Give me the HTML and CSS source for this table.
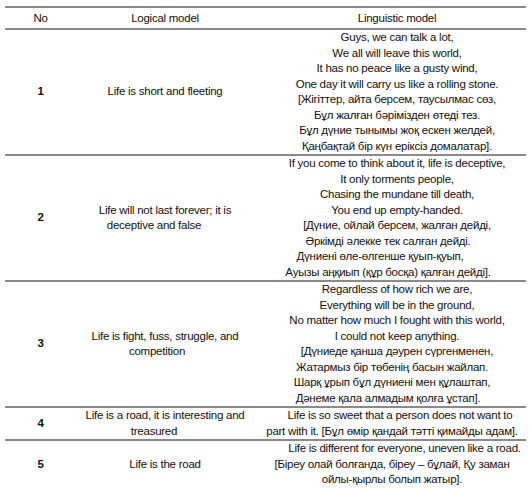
FILE: index.html
```html
<!DOCTYPE html>
<html lang="en">
<head>
<meta charset="utf-8">
<title>Models of life</title>
<link rel="stylesheet" href="styles.css">
</head>
<body>
<table class="models">
  <colgroup>
    <col class="col-no">
    <col class="col-logic">
    <col class="col-ling">
  </colgroup>
  <thead>
    <tr>
      <th class="no">No</th>
      <th class="logic">Logical model</th>
      <th class="ling">Linguistic model</th>
    </tr>
  </thead>
  <tbody>
    <tr>
      <td class="no">1</td>
      <td class="logic">Life is short and fleeting</td>
      <td class="ling">
        <span class="ln">Guys, we can talk a lot,</span>
        <span class="ln">We all will leave this world,</span>
        <span class="ln">It has no peace like a gusty wind,</span>
        <span class="ln">One day it will carry us like a rolling stone.</span>
        <span class="ln">[Жігіттер, айта берсем, таусылмас сөз,</span>
        <span class="ln">Бұл жалған бәрімізден өтеді тез.</span>
        <span class="ln">Бұл дүние тынымы жоқ ескен желдей,</span>
        <span class="ln">Қаңбақтай бір күн еріксіз домалатар].</span>
      </td>
    </tr>
    <tr>
      <td class="no">2</td>
      <td class="logic">
        <span class="ln">Life will not last forever; it is</span>
        <span class="ln tail">deceptive and false</span>
      </td>
      <td class="ling">
        <span class="ln">If you come to think about it, life is deceptive,</span>
        <span class="ln">It only torments people,</span>
        <span class="ln">Chasing the mundane till death,</span>
        <span class="ln">You end up empty-handed.</span>
        <span class="ln">[Дүние, ойлай берсем, жалған дейді,</span>
        <span class="ln nudge-1">Әркімді әлекке тек салған дейді.</span>
        <span class="ln nudge-2">Дүниені өле-өлгенше қуып-қуып,</span>
        <span class="ln nudge-1">Ауызы аңқиып (құр босқа) қалған дейді].</span>
      </td>
    </tr>
    <tr>
      <td class="no">3</td>
      <td class="logic">
        <span class="ln">Life is fight, fuss, struggle, and</span>
        <span class="ln tail-s">competition</span>
      </td>
      <td class="ling">
        <span class="ln">Regardless of how rich we are,</span>
        <span class="ln">Everything will be in the ground,</span>
        <span class="ln">No matter how much I fought with this world,</span>
        <span class="ln">I could not keep anything.</span>
        <span class="ln">[Дүниеде қанша дәурен сүргенменен,</span>
        <span class="ln nudge-s">Жатармыз бір төбенің басын жайлап.</span>
        <span class="ln nudge-s">Шарқ ұрып бұл дүниені мен құлаштап,</span>
        <span class="ln nudge-1">Дәнеме қала алмадым қолға ұстап].</span>
      </td>
    </tr>
    <tr>
      <td class="no">4</td>
      <td class="logic">
        <span class="ln">Life is a road, it is interesting and</span>
        <span class="ln tail">treasured</span>
      </td>
      <td class="ling short">
        <span class="ln lead-1">Life is so sweet that a person does not want to</span>
        <span class="ln">part with it. [Бұл өмір қандай тәтті қимайды адам].</span>
      </td>
    </tr>
    <tr>
      <td class="no">5</td>
      <td class="logic">Life is the road</td>
      <td class="ling short">
        <span class="ln lead-2">Life is different for everyone, uneven like a road.</span>
        <span class="ln">[Біреу олай болғанда, біреу – бұлай, Қу заман</span>
        <span class="ln">ойлы-қырлы болып жатыр].</span>
      </td>
    </tr>
  </tbody>
</table>
</body>
</html>
```

FILE: styles.css
```css
html, body {
  margin: 0;
  padding: 0;
  background: #ffffff;
}

body {
  padding: 6px 0 0 5px;
  font-family: "Liberation Sans", Arial, sans-serif;
  font-size: 11.5px;
  letter-spacing: -0.25px;
  line-height: 15.5px;
  color: #111111;
}

.models {
  width: 521px;
  table-layout: fixed;
  border-collapse: collapse;
  border-spacing: 0;
}

.col-no { width: 71px; }
.col-logic { width: 182px; }
.col-ling { width: 268px; }

.models th,
.models td {
  padding: 0;
  text-align: center;
  vertical-align: middle;
  border-top: 2px solid #8a8a8a;
  border-bottom: 2px solid #8a8a8a;
  white-space: nowrap;
}

.models th {
  font-weight: normal;
  height: 20px;
  line-height: 20px;
}

.models td.no {
  font-weight: bold;
}

.models .logic {
  padding-right: 4px;
}

.models .ling {
  padding-left: 10px;
}

.models .ling.short {
  padding-left: 0;
}

.ln {
  display: block;
}

.tail { padding-right: 22px; }
.tail-s { padding-right: 16px; }

.nudge-s { padding-right: 10px; }
.nudge-1 { padding-right: 18px; }
.nudge-2 { padding-right: 34px; }

.lead-1 { padding-left: 16px; }
.lead-2 { padding-left: 25px; }
```
